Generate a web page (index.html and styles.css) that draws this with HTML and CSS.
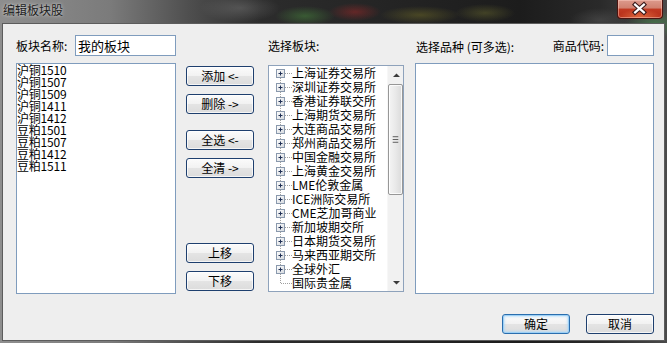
FILE: index.html
```html
<!DOCTYPE html>
<html lang="zh-CN">
<head>
<meta charset="utf-8">
<title>编辑板块股</title>
<link rel="stylesheet" href="styles.css">
</head>
<body>
<svg class="defs" width="0" height="0" aria-hidden="true">
  <defs>
    <linearGradient id="boxfill" x1="0" y1="0" x2="1" y2="1">
      <stop offset="0" stop-color="#ffffff"/>
      <stop offset="1" stop-color="#d4d8dd"/>
    </linearGradient>
    <symbol id="plusnode" viewBox="0 0 23 14">
      <path d="M11.5 0V3M11.5 12V14" stroke="#a0a0a0" stroke-dasharray="1 1"/>
      <path d="M16 7.5H23" stroke="#a0a0a0" stroke-dasharray="1 1"/>
      <rect x="7.5" y="3.5" width="8" height="8" fill="url(#boxfill)" stroke="#8a99ad"/>
      <path d="M9.5 7.5H13.5M11.5 5.5V9.5" stroke="#1f2f55"/>
    </symbol>
    <symbol id="firstnode" viewBox="0 0 23 14">
      <path d="M11.5 12V14" stroke="#a0a0a0" stroke-dasharray="1 1"/>
      <path d="M16 7.5H23" stroke="#a0a0a0" stroke-dasharray="1 1"/>
      <rect x="7.5" y="3.5" width="8" height="8" fill="url(#boxfill)" stroke="#8a99ad"/>
      <path d="M9.5 7.5H13.5M11.5 5.5V9.5" stroke="#1f2f55"/>
    </symbol>
    <symbol id="lastnode" viewBox="0 0 23 14">
      <path d="M11.5 0V7.5H23" fill="none" stroke="#a0a0a0" stroke-dasharray="1 1"/>
    </symbol>
  </defs>
</svg>
<div class="window">
  <div class="titlebar">
    <span class="title">编辑板块股</span>
    <span class="close">
      <svg width="46" height="19" viewBox="0 0 46 19">
        <path d="M18.5 5.5L27.5 13.5M27.5 5.5L18.5 13.5" stroke="#3a1a1a" stroke-width="4.5" stroke-linecap="square"/>
        <path d="M18.5 5.5L27.5 13.5M27.5 5.5L18.5 13.5" stroke="#ffffff" stroke-width="2.2" stroke-linecap="square"/>
      </svg>
    </span>
  </div>
  <div class="client">
    <div class="main">
      <div class="col col-name">
        <div class="head">
          <span class="label">板块名称:</span>
          <span class="field name-field">我的板块</span>
        </div>
        <div class="listbox left-list">
          <div class="item">沪铜1510</div>
          <div class="item">沪铜1507</div>
          <div class="item">沪铜1509</div>
          <div class="item">沪铜1411</div>
          <div class="item">沪铜1412</div>
          <div class="item">豆粕1501</div>
          <div class="item">豆粕1507</div>
          <div class="item">豆粕1412</div>
          <div class="item">豆粕1511</div>
        </div>
      </div>
      <div class="col col-actions">
        <button class="btn">添加 &lt;-</button>
        <button class="btn">删除 -&gt;</button>
        <button class="btn gap-lg">全选 &lt;-</button>
        <button class="btn">全清 -&gt;</button>
        <button class="btn gap-move">上移</button>
        <button class="btn">下移</button>
      </div>
      <div class="col col-tree">
        <div class="head"><span class="label">选择板块:</span></div>
        <div class="tree">
          <ul class="nodes">
            <li><svg class="node" width="23" height="14"><use href="#firstnode"/></svg>上海证券交易所</li>
            <li><svg class="node" width="23" height="14"><use href="#plusnode"/></svg>深圳证券交易所</li>
            <li><svg class="node" width="23" height="14"><use href="#plusnode"/></svg>香港证券联交所</li>
            <li><svg class="node" width="23" height="14"><use href="#plusnode"/></svg>上海期货交易所</li>
            <li><svg class="node" width="23" height="14"><use href="#plusnode"/></svg>大连商品交易所</li>
            <li><svg class="node" width="23" height="14"><use href="#plusnode"/></svg>郑州商品交易所</li>
            <li><svg class="node" width="23" height="14"><use href="#plusnode"/></svg>中国金融交易所</li>
            <li><svg class="node" width="23" height="14"><use href="#plusnode"/></svg>上海黄金交易所</li>
            <li><svg class="node" width="23" height="14"><use href="#plusnode"/></svg>LME伦敦金属</li>
            <li><svg class="node" width="23" height="14"><use href="#plusnode"/></svg>ICE洲际交易所</li>
            <li><svg class="node" width="23" height="14"><use href="#plusnode"/></svg>CME芝加哥商业</li>
            <li><svg class="node" width="23" height="14"><use href="#plusnode"/></svg>新加坡期交所</li>
            <li><svg class="node" width="23" height="14"><use href="#plusnode"/></svg>日本期货交易所</li>
            <li><svg class="node" width="23" height="14"><use href="#plusnode"/></svg>马来西亚期交所</li>
            <li><svg class="node" width="23" height="14"><use href="#plusnode"/></svg>全球外汇</li>
            <li><svg class="node" width="23" height="14"><use href="#lastnode"/></svg>国际贵金属</li>
          </ul>
          <div class="vscroll">
            <div class="arrow">
              <svg width="16" height="17" viewBox="0 0 16 17"><path d="M5 11H12L8.5 7.5Z" fill="#3b3b3b"/></svg>
            </div>
            <div class="thumb">
              <svg width="14" height="9" viewBox="0 0 14 9"><path d="M4 1.5H10M4 4.5H10M4 7.5H10" stroke="#555"/></svg>
            </div>
            <div class="track"></div>
            <div class="arrow">
              <svg width="16" height="17" viewBox="0 0 16 17"><path d="M5 7H12L8.5 10.5Z" fill="#3b3b3b"/></svg>
            </div>
          </div>
        </div>
      </div>
      <div class="col col-pick">
        <div class="head head-split">
          <span class="label">选择品种 (可多选):</span>
          <span class="code">
            <span class="label">商品代码:</span>
            <span class="field code-field"></span>
          </span>
        </div>
        <div class="listbox right-list"></div>
      </div>
    </div>
    <div class="footer">
      <button class="btn btn-default">确定</button>
      <button class="btn">取消</button>
    </div>
  </div>
</div>
</body>
</html>
```

FILE: styles.css
```css
* {
  box-sizing: border-box;
}

html, body {
  margin: 0;
  padding: 0;
}

body {
  width: 667px;
  height: 343px;
  overflow: hidden;
  font-family: "Noto Sans CJK SC", "Noto Sans", sans-serif;
  font-size: 12px;
  color: #000;
}

.defs {
  position: absolute;
  width: 0;
  height: 0;
}

.window {
  width: 667px;
  height: 343px;
  display: flex;
  flex-direction: column;
  background:
    radial-gradient(ellipse 30px 10px at 305px 16px, rgba(70, 130, 60, 0.55), transparent),
    radial-gradient(ellipse 26px 9px at 355px 12px, rgba(150, 40, 40, 0.55), transparent),
    radial-gradient(ellipse 40px 9px at 420px 15px, rgba(120, 115, 40, 0.45), transparent),
    radial-gradient(ellipse 30px 9px at 485px 13px, rgba(120, 120, 50, 0.4), transparent),
    radial-gradient(ellipse 30px 12px at 600px 20px, rgba(80, 80, 80, 0.6), transparent),
    radial-gradient(ellipse 30px 14px at 655px 24px, rgba(70, 130, 75, 0.7), transparent),
    radial-gradient(ellipse 40px 14px at 240px 8px, rgba(120, 120, 120, 0.45), transparent),
    linear-gradient(90deg, #8e8e8e 0, #7b7b7b 110px, #4e4e4e 190px, #2c2c2c 260px, #1c1c1c 520px, #2a2a2a 600px, #4a4a4a 667px);
}

.titlebar {
  height: 23px;
  flex: none;
  display: flex;
  align-items: flex-start;
}

.title {
  margin: 2px 0 0 3px;
  line-height: 16px;
  font-size: 12px;
  color: #1c1c1c;
  text-shadow: 0 0 4px rgba(255, 255, 255, 0.55), 0 0 2px rgba(255, 255, 255, 0.4);
}

.close {
  margin-left: auto;
  margin-right: 4px;
  width: 46px;
  height: 19px;
  border: 1px solid #4a1410;
  border-top: none;
  border-radius: 0 0 4px 4px;
  background:
    radial-gradient(ellipse 22px 9px at 50% 100%, rgba(255, 150, 90, 0.6), transparent),
    linear-gradient(180deg, #dc9a8c 0, #d0806f 45%, #c13a22 50%, #b42c18 100%);
  box-shadow: inset 0 0 0 1px rgba(255, 210, 200, 0.45);
  display: flex;
  align-items: center;
  justify-content: center;
}

.close svg {
  display: block;
  margin-left: -1px;
  margin-top: -1px;
}

.client {
  margin: 0 2px 2px 2px;
  height: 318px;
  border: 1px solid #5c5c5c;
  background: #eeeeee;
  display: flex;
  flex-direction: column;
  padding: 11px 10px 0 13px;
}

.main {
  display: flex;
  align-items: flex-start;
}

.col {
  display: flex;
  flex-direction: column;
}

.col-name {
  width: 160px;
}

.col-actions {
  width: 68px;
  margin-left: 10px;
  padding-top: 31px;
}

.col-tree {
  width: 136px;
  margin-left: 14px;
}

.col-pick {
  width: 239px;
  margin-left: 11px;
}

.head {
  height: 21px;
  display: flex;
  align-items: center;
  justify-content: space-between;
}

.label {
  line-height: 14px;
  white-space: nowrap;
}

.col-tree .label {
  margin-top: 1px;
}

.col-pick .head > .label {
  margin-left: 1px;
  margin-top: 2px;
}

.code {
  display: flex;
  align-items: center;
}

.code .label {
  margin-right: 3px;
}

.field {
  height: 21px;
  background: #fff;
  border: 1px solid #7f9cbd;
  line-height: 19px;
  padding-left: 2px;
  font-size: 13px;
}

.name-field {
  width: 101px;
}

.code-field {
  width: 47px;
}

.listbox {
  margin-top: 7px;
  height: 231px;
  background: #fff;
  border: 1px solid #7f9cbd;
}

.left-list .item {
  height: 12px;
  line-height: 12px;
  white-space: nowrap;
  letter-spacing: -0.2px;
}

.btn {
  width: 68px;
  height: 20px;
  padding: 0;
  margin: 0 0 8px 0;
  font-family: inherit;
  font-size: 12px;
  color: #000;
  line-height: 16px;
  border: 1px solid #1e3f6e;
  border-radius: 3px;
  background: linear-gradient(180deg, #fbfbfb 0, #f2f2f2 48%, #e4e4e4 52%, #dcdcdc 100%);
  box-shadow: inset 0 0 0 1px rgba(255, 255, 255, 0.7);
  white-space: pre;
}

.gap-lg {
  margin-top: 8px;
}

.gap-move {
  margin-top: 57px;
}

.tree {
  margin-top: 9px;
  height: 227px;
  background: #fff;
  border: 1px solid #8ea2bb;
  display: flex;
}

.nodes {
  list-style: none;
  margin: 0;
  padding: 0;
  flex: 1;
  min-width: 0;
}

.nodes li {
  height: 14px;
  line-height: 14px;
  display: flex;
  align-items: center;
  white-space: nowrap;
  font-size: 12px;
}

.node {
  flex: none;
  display: block;
}

.vscroll {
  width: 16px;
  flex: none;
  display: flex;
  flex-direction: column;
  background: #f1f1f1;
  border-left: 1px solid #f7f7f7;
}

.arrow {
  height: 17px;
  flex: none;
}

.arrow svg {
  display: block;
}

.thumb {
  margin-top: 1px;
  height: 111px;
  flex: none;
  border: 1px solid #979797;
  border-radius: 2px;
  background: linear-gradient(90deg, #f4f4f4 0, #e9e9e9 50%, #dadada 100%);
  box-shadow: inset 0 0 0 1px rgba(255, 255, 255, 0.8);
  display: flex;
  align-items: center;
  justify-content: center;
}

.thumb svg {
  display: block;
}

.track {
  flex: 1;
}

.head-split {
  justify-content: space-between;
}

.footer {
  margin-top: 15px;
  display: flex;
  justify-content: flex-end;
  gap: 16px;
}

.footer .btn {
  margin: 0;
}

.btn-default {
  border-color: #2a6eae;
  box-shadow: inset 0 0 0 1px #9dd0f5, inset 0 0 2px 2px rgba(170, 215, 250, 0.6);
}
```
